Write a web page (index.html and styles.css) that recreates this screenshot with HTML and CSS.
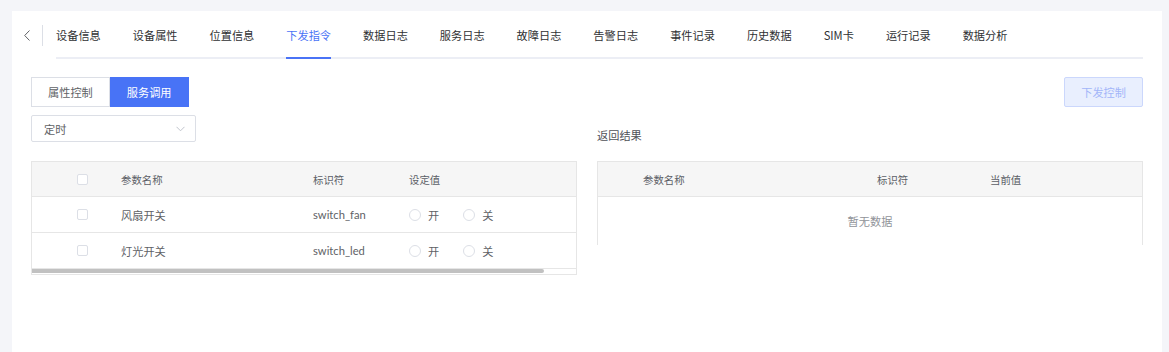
FILE: index.html
```html
<!DOCTYPE html>
<html lang="zh-CN">
<head>
    <meta charset="UTF-8">
    <title>下发指令</title>
    <link rel="stylesheet" href="styles.css">
</head>
<body>
    <div class="card">
        <div class="tabs-head">
            <span class="back">
                <svg width="6" height="11" viewBox="0 0 6 11"><path d="M5.5 0.5 L0.7 5.5 L5.5 10.5" fill="none" stroke="#606266" stroke-width="1"/></svg>
            </span>
            <span class="divider"></span>
            <div class="nav">
                <div class="tab">设备信息</div>
                <div class="tab">设备属性</div>
                <div class="tab">位置信息</div>
                <div class="tab active">下发指令</div>
                <div class="tab">数据日志</div>
                <div class="tab">服务日志</div>
                <div class="tab">故障日志</div>
                <div class="tab">告警日志</div>
                <div class="tab">事件记录</div>
                <div class="tab">历史数据</div>
                <div class="tab">SIM卡</div>
                <div class="tab">运行记录</div>
                <div class="tab">数据分析</div>
            </div>
        </div>

        <div class="content">
            <div class="toolbar">
                <div class="seg">
                    <button class="btn">属性控制</button>
                    <button class="btn primary">服务调用</button>
                </div>
                <button class="btn disabled">下发控制</button>
            </div>

            <div class="columns">
                <div class="col">
                    <div class="select">
                        <span>定时</span>
                        <svg width="9" height="6" viewBox="0 0 9 6"><path d="M0.5 0.8 L4.5 4.8 L8.5 0.8" fill="none" stroke="#c0c4cc" stroke-width="1"/></svg>
                    </div>
                    <div class="table left-table">
                        <div class="row head">
                            <div class="cell chk"><span class="checkbox"></span></div>
                            <div class="cell">参数名称</div>
                            <div class="cell">标识符</div>
                            <div class="cell">设定值</div>
                        </div>
                        <div class="row">
                            <div class="cell chk"><span class="checkbox"></span></div>
                            <div class="cell">风扇开关</div>
                            <div class="cell ident">switch_fan</div>
                            <div class="cell">
                                <span class="radio"><i></i>开</span>
                                <span class="radio"><i></i>关</span>
                            </div>
                        </div>
                        <div class="row">
                            <div class="cell chk"><span class="checkbox"></span></div>
                            <div class="cell">灯光开关</div>
                            <div class="cell ident">switch_led</div>
                            <div class="cell">
                                <span class="radio"><i></i>开</span>
                                <span class="radio"><i></i>关</span>
                            </div>
                        </div>
                        <div class="scroll"><div class="thumb"></div></div>
                    </div>
                </div>

                <div class="col">
                    <div class="result-title">返回结果</div>
                    <div class="table right-table">
                        <div class="row head">
                            <div class="cell"></div>
                            <div class="cell">参数名称</div>
                            <div class="cell">标识符</div>
                            <div class="cell">当前值</div>
                        </div>
                        <div class="empty">暂无数据</div>
                    </div>
                </div>
            </div>
        </div>
    </div>
</body>
</html>
```

FILE: styles.css
```css
body {
    margin: 0;
    background-color: #f4f5f9;
    font-family: "Noto Sans CJK SC", "Noto Sans", sans-serif;
    color: #606266;
}

.card {
    margin: 11px 7px 0 12px;
    height: 341px;
    background-color: #fff;
}

/* tabs */
.tabs-head {
    display: flex;
    align-items: center;
    height: 48px;
    padding-right: 19px;
}

.back {
    display: flex;
    margin-left: 12px;
}

.divider {
    width: 1px;
    height: 21px;
    margin-left: 12px;
    background-color: #dcdfe6;
}

.nav {
    flex: 1;
    display: flex;
    height: 48px;
    margin-left: 13px;
    box-sizing: border-box;
    border-bottom: 2px solid #eceef5;
}

.tab {
    position: relative;
    padding: 2px 16px 0;
    line-height: 44px;
    font-size: 11.2px;
    color: #303133;
    white-space: nowrap;
}

.tab:first-child {
    padding-left: 0;
}

.tab.active {
    color: #4a73f6;
}

.tab.active::after {
    content: "";
    position: absolute;
    left: 16px;
    right: 16px;
    bottom: -2px;
    height: 2px;
    background-color: #4a73f6;
}

/* content */
.content {
    padding: 18px 19px 0;
}

.toolbar {
    display: flex;
    justify-content: space-between;
}

.seg {
    display: flex;
}

.btn {
    height: 30px;
    padding: 0 16px;
    font-family: inherit;
    font-size: 11.2px;
    color: #606266;
    background-color: #fff;
    border: 1px solid #dcdfe6;
    border-radius: 0;
    cursor: pointer;
}

.btn.primary {
    color: #fff;
    background-color: #4873f6;
    border-color: #4873f6;
}

.btn.disabled {
    color: #a3b6f9;
    background-color: #e9effe;
    border-color: #cbd7fc;
    border-radius: 2px;
}

.columns {
    display: grid;
    grid-template-columns: 1fr 1fr;
    gap: 20px;
    margin-top: 8px;
}

.select {
    display: flex;
    align-items: center;
    justify-content: space-between;
    width: 165px;
    height: 27px;
    box-sizing: border-box;
    padding: 0 10px 0 12px;
    margin-bottom: 19px;
    border: 1px solid #dcdfe6;
    border-radius: 2px;
    font-size: 11.2px;
}

.result-title {
    height: 27px;
    margin-bottom: 19px;
    padding-top: 12px;
    box-sizing: border-box;
    font-size: 11.2px;
    line-height: 16px;
    color: #4f5157;
}

/* tables */
.table {
    border: 1px solid #e6e6e6;
}

.row {
    display: grid;
    align-items: center;
    height: 36px;
    box-sizing: border-box;
    border-bottom: 1px solid #e6e6e6;
    font-size: 11.2px;
}

.row.head {
    height: 35px;
    background-color: #f6f6f6;
    font-size: 10.4px;
    color: #5c5f66;
}

.left-table .row {
    grid-template-columns: 89px 192px 96px 1fr;
}

.right-table .row {
    grid-template-columns: 45px 234px 113px 1fr;
}

.right-table {
    border-bottom: none;
}

.cell {
    display: flex;
    align-items: center;
    white-space: nowrap;
}

.cell.chk {
    padding-left: 45px;
}

.cell.ident {
    font-family: Lato, "Noto Sans CJK SC", sans-serif;
}

.checkbox {
    display: inline-block;
    width: 11px;
    height: 11px;
    box-sizing: border-box;
    border: 1px solid #dcdfe6;
    border-radius: 2px;
    background-color: #fff;
}

.radio {
    display: inline-flex;
    align-items: center;
    margin-right: 24px;
    color: #606266;
}

.radio i {
    width: 12px;
    height: 12px;
    box-sizing: border-box;
    margin-right: 7px;
    border: 1px solid #dcdfe6;
    border-radius: 50%;
}

.scroll {
    height: 5px;
}

.thumb {
    width: 512px;
    height: 4px;
    background-color: #c1c1c1;
    border-radius: 0 2px 2px 0;
}

.empty {
    height: 48px;
    line-height: 48px;
    text-align: center;
    font-size: 11.2px;
    color: #909399;
}
```
